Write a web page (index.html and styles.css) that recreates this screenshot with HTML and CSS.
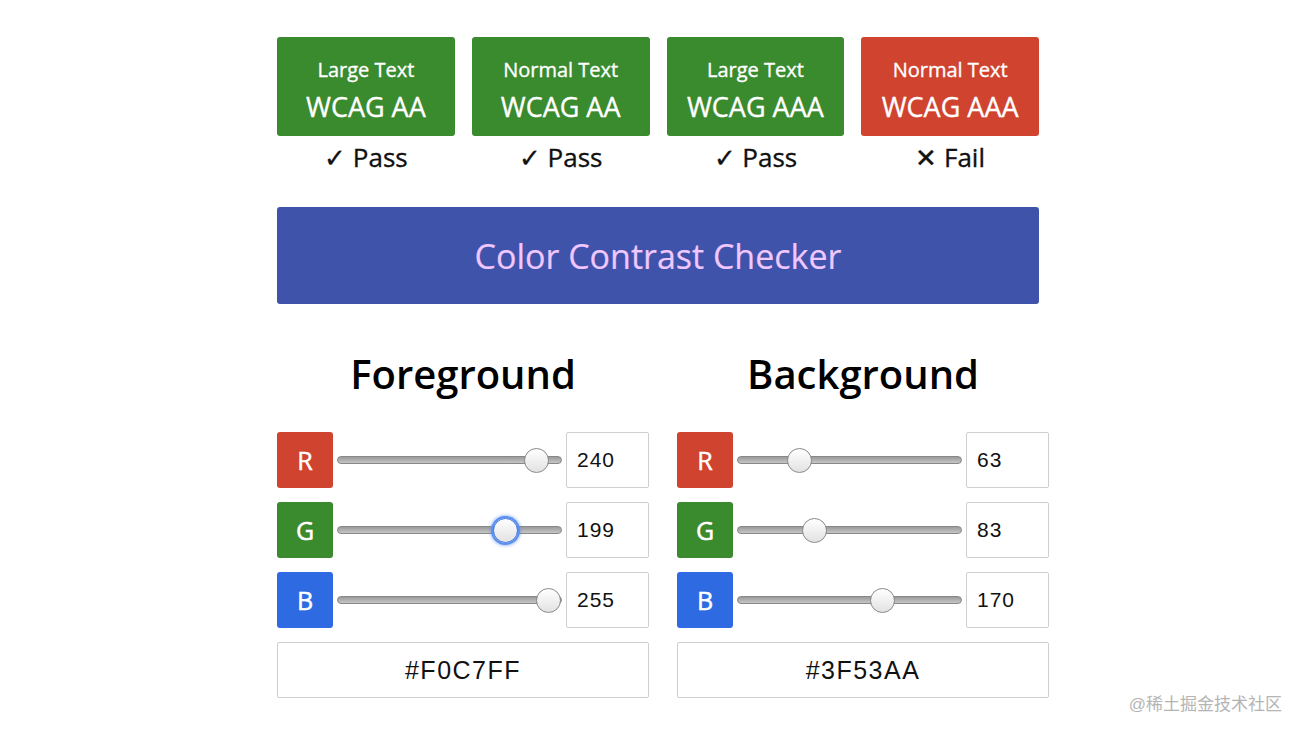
FILE: index.html
```html
<!DOCTYPE html>
<html lang="en">
<head>
<meta charset="utf-8">
<title>Color Contrast Checker</title>
<link rel="stylesheet" href="styles.css">
</head>
<body>
<div class="app">
  <div class="results">
    <div class="result">
      <div class="card pass"><span class="card-sub">Large Text</span><span class="card-main">WCAG AA</span></div>
      <div class="status">✓ Pass</div>
    </div>
    <div class="result">
      <div class="card pass"><span class="card-sub">Normal Text</span><span class="card-main">WCAG AA</span></div>
      <div class="status">✓ Pass</div>
    </div>
    <div class="result">
      <div class="card pass"><span class="card-sub">Large Text</span><span class="card-main">WCAG AAA</span></div>
      <div class="status">✓ Pass</div>
    </div>
    <div class="result">
      <div class="card fail"><span class="card-sub">Normal Text</span><span class="card-main">WCAG AAA</span></div>
      <div class="status">✕ Fail</div>
    </div>
  </div>

  <div class="banner">Color Contrast Checker</div>

  <div class="pickers">
    <section class="picker">
      <h2 class="picker-title">Foreground</h2>
      <div class="channel">
        <span class="badge red">R</span>
        <input class="slider" type="range" min="0" max="255" value="240">
        <input class="num" type="text" value="240">
      </div>
      <div class="channel">
        <span class="badge green">G</span>
        <input class="slider focus" type="range" min="0" max="255" value="199">
        <input class="num" type="text" value="199">
      </div>
      <div class="channel">
        <span class="badge blue">B</span>
        <input class="slider" type="range" min="0" max="255" value="255">
        <input class="num" type="text" value="255">
      </div>
      <input class="hex" type="text" value="#F0C7FF">
    </section>
    <section class="picker">
      <h2 class="picker-title">Background</h2>
      <div class="channel">
        <span class="badge red">R</span>
        <input class="slider" type="range" min="0" max="255" value="63">
        <input class="num" type="text" value="63">
      </div>
      <div class="channel">
        <span class="badge green">G</span>
        <input class="slider" type="range" min="0" max="255" value="83">
        <input class="num" type="text" value="83">
      </div>
      <div class="channel">
        <span class="badge blue">B</span>
        <input class="slider" type="range" min="0" max="255" value="170">
        <input class="num" type="text" value="170">
      </div>
      <input class="hex" type="text" value="#3F53AA">
    </section>
  </div>
</div>
<div class="watermark">@稀土掘金技术社区</div>
</body>
</html>
```

FILE: styles.css
```css
* { box-sizing: border-box; }
html, body { margin: 0; background: #fff; }
body {
  font-family: "Open Sans", "Noto Sans", sans-serif;
  color: #111;
  width: 1304px;
  height: 734px;
  overflow: hidden;
  position: relative;
}
.app {
  padding: 37px 0 0 277px;
}
.results {
  width: 762px;
  display: grid;
  grid-template-columns: repeat(4, 1fr);
  column-gap: 17px;
}
.result { display: flex; flex-direction: column; align-items: stretch; }
.card {
  height: 99px;
  padding-top: 19px;
  border-radius: 3px;
  color: #fff;
  display: flex;
  flex-direction: column;
  align-items: center;
  justify-content: flex-start;
  -webkit-text-stroke: 0.35px currentColor;
}
.card.pass { background: #3a8a2e; }
.card.fail { background: #d0432f; }
.card-sub { font-size: 20px; line-height: 28px; }
.card-main { font-size: 27px; line-height: 40px; margin-top: 3px; }
.status {
  height: 42px;
  line-height: 42px;
  font-size: 26px;
  text-align: center;
  color: #111;
  -webkit-text-stroke: 0.35px currentColor;
}
.banner {
  margin-top: 29px;
  width: 762px;
  height: 97px;
  background: #3f53aa;
  color: #f0c7ff;
  border-radius: 3px;
  display: flex;
  align-items: center;
  justify-content: center;
  font-size: 34px;
  -webkit-text-stroke: 0.2px currentColor;
}
.pickers {
  margin-top: 41px;
  display: grid;
  grid-template-columns: 372px 372px;
  column-gap: 28px;
}
.picker { display: flex; flex-direction: column; gap: 14px; }
.picker-title {
  margin: 0 0 14px;
  height: 59px;
  line-height: 58px;
  text-align: center;
  font-size: 40px;
  font-weight: 600;
  color: #000;
}
.channel { display: flex; align-items: center; height: 56px; }
.badge {
  width: 56px;
  height: 56px;
  border-radius: 3px;
  color: #fff;
  font-size: 25px;
  display: flex;
  align-items: center;
  justify-content: center;
  flex: none;
  -webkit-text-stroke: 0.5px currentColor;
}
.badge.red { background: #d0432f; }
.badge.green { background: #3a8a2e; }
.badge.blue { background: #2e6be3; }
.slider {
  -webkit-appearance: none;
  appearance: none;
  width: 225px;
  height: 28px;
  margin: 0 4px;
  background: transparent;
  flex: none;
}
.slider:focus { outline: none; }
.slider::-webkit-slider-runnable-track {
  height: 8px;
  border-radius: 4px;
  background: linear-gradient(#9a9a9a, #c6c6c6);
  border: 1px solid #888;
}
.slider::-webkit-slider-thumb {
  -webkit-appearance: none;
  appearance: none;
  box-sizing: border-box;
  width: 25px;
  height: 25px;
  border-radius: 50%;
  background: linear-gradient(#ffffff, #e2e2e2);
  border: 1px solid #8a8a8a;
  margin-top: -9.5px;
}
.slider.focus::-webkit-slider-thumb {
  border: 1px solid #3b76e0;
  box-shadow: 0 0 0 2px #5d8ff0, 0 0 3px 3px rgba(93, 143, 240, 0.55);
}
.num {
  width: 83px;
  height: 56px;
  border: 1px solid #cfcfcf;
  border-radius: 2px;
  padding: 0 0 0 10px;
  font-family: "Liberation Sans", Arial, sans-serif;
  font-size: 21px;
  letter-spacing: 1px;
  color: #111;
  background: #fff;
  flex: none;
}
.hex {
  width: 372px;
  height: 56px;
  border: 1px solid #cfcfcf;
  border-radius: 2px;
  text-align: center;
  font-family: "Liberation Sans", Arial, sans-serif;
  font-size: 25px;
  letter-spacing: 1.5px;
  color: #111;
  background: #fff;
}
.watermark {
  position: absolute;
  right: 22px;
  bottom: 19px;
  font-family: "Liberation Sans", "Noto Sans CJK SC", sans-serif;
  font-size: 17px;
  color: #b4b4b4;
}
```
